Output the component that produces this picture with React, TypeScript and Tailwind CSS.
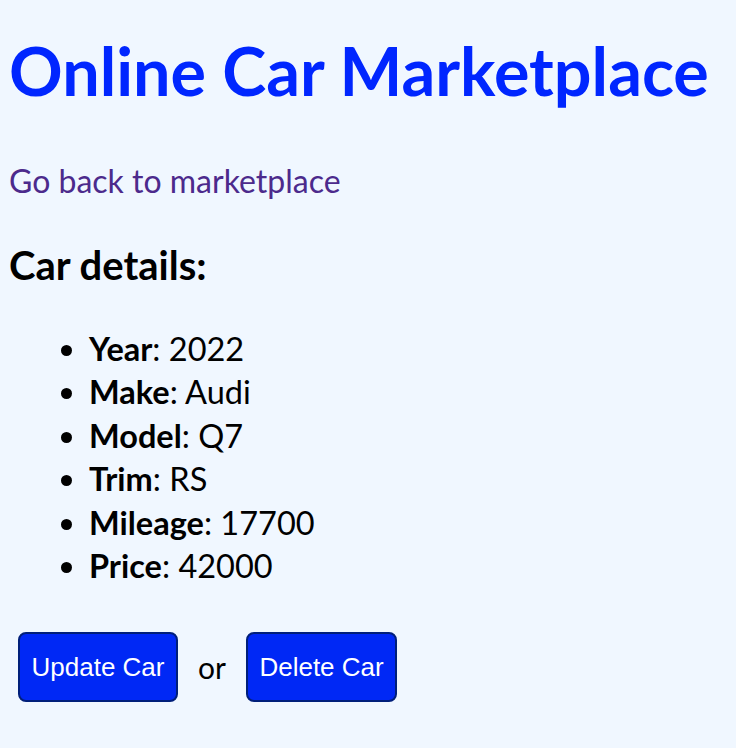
import React from 'react';

const details: [string, string][] = [
    ['Year', '2022'],
    ['Make', 'Audi'],
    ['Model', 'Q7'],
    ['Trim', 'RS'],
    ['Mileage', '17700'],
    ['Price', '42000'],
];

export default function App() {
    return (
        <div className="min-h-[748px] bg-[#f0f7ff] px-[9px] pt-[27px] font-['Lato',sans-serif] text-black">
            <h1 className="text-[66.5px] font-bold leading-[86px] text-[#0026ff]">Online Car Marketplace</h1>

            <a href="#" className="mt-[46px] block text-[32px] leading-[44px] text-[#4c2a8c]">
                Go back to marketplace
            </a>

            <h3 className="mt-[37px] text-[40px] font-bold leading-[50px]">Car details:</h3>

            <ul className="mt-[37px] list-disc pl-[80px] text-[32.5px] leading-[43.4px]">
                {details.map(([label, value]) => (
                    <li key={label}>
                        <strong className="font-bold">{label}</strong>: {value}
                    </li>
                ))}
            </ul>

            <div className="mt-[45px] flex items-center gap-[20px] pl-[9px]">
                <button className="h-[70px] rounded-[8px] border-2 border-[#001f7a] bg-[#0028f5] px-[11.5px] font-['Liberation_Sans',sans-serif] text-[26px] text-white">
                    Update Car
                </button>
                <span className="text-[30px]">or</span>
                <button className="h-[70px] rounded-[8px] border-2 border-[#001f7a] bg-[#0028f5] px-[11.5px] font-['Liberation_Sans',sans-serif] text-[26px] text-white">
                    Delete Car
                </button>
            </div>
        </div>
    );
}
